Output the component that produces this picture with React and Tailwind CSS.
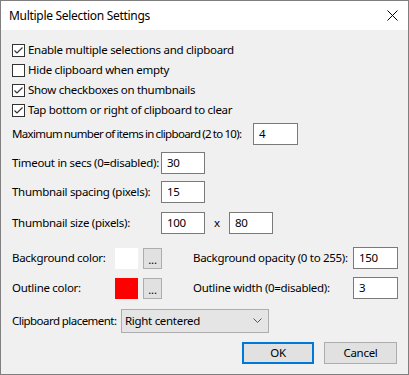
import React from "react";

function Check({ checked }) {
  return (
    <span className="w-[13px] h-[13px] border border-[#333333] bg-white flex items-center justify-center shrink-0">
      {checked && (
        <svg width="11" height="11" viewBox="0 0 11 11">
          <path d="M1.5 5.5 L4 8 L9.5 2.5" fill="none" stroke="#333333" strokeWidth="1.2" />
        </svg>
      )}
    </span>
  );
}

function CheckRow({ checked, label }) {
  return (
    <div className="h-[20px] flex items-center">
      <Check checked={checked} />
      <span className="ml-[3px] whitespace-nowrap">{label}</span>
    </div>
  );
}

function Input({ value, w = "w-[44px]" }) {
  return (
    <div className={`${w} h-[22px] border border-[#7a7a7a] bg-white flex items-center pl-[5px] shrink-0`}>
      {value}
    </div>
  );
}

function Dots() {
  return (
    <div className="w-[19px] h-[21px] border border-[#adadad] bg-[#e1e1e1] flex items-end justify-center pb-[1px] shrink-0 leading-[14px]">
      ...
    </div>
  );
}

export default function App() {
  return (
    <div
      className="w-[409px] h-[375px] border border-[#7f7f7f] bg-[#f0f0f0] flex flex-col text-[11.5px] tracking-[-0.3px] text-black"
      style={{ fontFamily: '"Noto Sans", "Open Sans", sans-serif' }}
    >
      <div className="h-[29px] bg-white flex items-center justify-between pl-[8px] pr-[10px] shrink-0 text-[12px]">
        <span className="whitespace-nowrap">Multiple Selection Settings</span>
        <svg width="11" height="11" viewBox="0 0 11 11">
          <path d="M0.5 0.5 L10.5 10.5 M10.5 0.5 L0.5 10.5" stroke="#000" strokeWidth="1" />
        </svg>
      </div>
      <div className="flex flex-col pl-[11px] pt-[10px]">
        <CheckRow checked label="Enable multiple selections and clipboard" />
        <CheckRow label="Hide clipboard when empty" />
        <CheckRow checked label="Show checkboxes on thumbnails" />
        <CheckRow checked label="Tap bottom or right of clipboard to clear" />

        <div className="flex items-center mt-[3px] h-[22px]">
          <span className="w-[241px] whitespace-nowrap tracking-[-0.65px] [word-spacing:-0.5px]">Maximum number of items in clipboard (2 to 10):</span>
          <Input value="4" w="w-[45px]" />
        </div>
        <div className="flex items-center mt-[7px] h-[22px]">
          <span className="w-[149px] whitespace-nowrap">Timeout in secs (0=disabled):</span>
          <Input value="30" />
        </div>
        <div className="flex items-center mt-[7px] h-[22px]">
          <span className="w-[149px] whitespace-nowrap">Thumbnail spacing (pixels):</span>
          <Input value="15" />
        </div>
        <div className="flex items-center mt-[9px] h-[22px]">
          <span className="w-[149px] whitespace-nowrap">Thumbnail size (pixels):</span>
          <Input value="100" />
          <span className="w-[24px] text-center">x</span>
          <Input value="80" />
        </div>

        <div className="flex items-center mt-[13px] h-[22px]">
          <span className="w-[103px] whitespace-nowrap">Background color:</span>
          <div className="w-[23px] h-[21px] bg-white shrink-0" />
          <div className="ml-[5px]"><Dots /></div>
          <span className="ml-[31px] w-[160px] whitespace-nowrap">Background opacity (0 to 255):</span>
          <Input value="150" w="w-[45px]" />
        </div>
        <div className="flex items-center mt-[8px] h-[22px]">
          <span className="w-[103px] whitespace-nowrap">Outline color:</span>
          <div className="w-[23px] h-[21px] bg-[#ff0000] shrink-0" />
          <div className="ml-[5px]"><Dots /></div>
          <span className="ml-[31px] w-[160px] whitespace-nowrap">Outline width (0=disabled):</span>
          <Input value="3" w="w-[45px]" />
        </div>

        <div className="flex items-center mt-[10px] h-[24px]">
          <span className="w-[109px] whitespace-nowrap tracking-[-0.55px]">Clipboard placement:</span>
          <div className="w-[148px] h-[24px] border border-[#adadad] bg-[#e5e5e5] flex items-center justify-between pl-[3px] pr-[6px]">
            <span className="whitespace-nowrap">Right centered</span>
            <svg width="9" height="6" viewBox="0 0 9 6">
              <path d="M0.5 0.5 L4.5 4.5 L8.5 0.5" fill="none" stroke="#555" strokeWidth="1" />
            </svg>
          </div>
        </div>

        <div className="flex justify-end mt-[9px] pr-[11px] gap-[10px]">
          <div className="w-[72px] h-[22px] border-2 border-[#0078d7] bg-[#e1e1e1] flex items-center justify-center">OK</div>
          <div className="w-[73px] h-[22px] border border-[#adadad] bg-[#e1e1e1] flex items-center justify-center">Cancel</div>
        </div>
      </div>
    </div>
  );
}
